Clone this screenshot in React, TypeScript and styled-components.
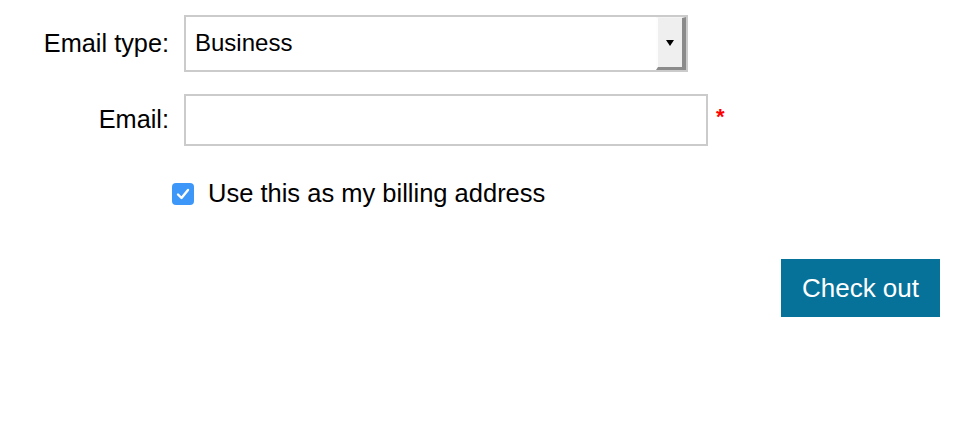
import React from "react";
import styled, { createGlobalStyle } from "styled-components";

const Global = createGlobalStyle`
  html, body { margin: 0; padding: 0; background: #fff; }
  body { font-family: "Liberation Sans", Arial, Helvetica, sans-serif; color: #000; }
`;

const Page = styled.div`
  width: 954px;
  height: 444px;
  box-sizing: border-box;
  padding: 15px 14px 0 0;
  display: flex;
  flex-direction: column;
`;

const Grid = styled.div`
  display: grid;
  grid-template-columns: 169px auto;
  column-gap: 15px;
  row-gap: 22px;
  align-items: center;
  justify-content: start;
`;

const Label = styled.label`
  text-align: right;
  font-size: 25.3px;
  line-height: 28px;
  margin-top: -2px;
`;

const FieldWrap = styled.div`
  display: flex;
  align-items: center;
  gap: 8px;
`;

const Select = styled.div`
  position: relative;
  width: 504px;
  height: 57px;
  box-sizing: border-box;
  border: 2px solid #cbcbcb;
  display: flex;
  align-items: center;
  padding-left: 9px;
  font-size: 24px;
`;

const SelectValue = styled.span`
  flex: 1;
  margin-top: -2px;
`;

const DropButton = styled.div`
  width: 30px;
  height: 100%;
  box-sizing: border-box;
  background: #efefef;
  border-top: 1px solid #f4f4f4;
  border-left: 2px solid #fdfdfd;
  border-right: 4px solid #8b8b8b;
  border-bottom: 3px solid #8b8b8b;
  display: flex;
  align-items: center;
  justify-content: center;
  padding-top: 1px;
`;

const Arrow = styled.span`
  width: 0;
  height: 0;
  border-left: 4.5px solid transparent;
  border-right: 4.5px solid transparent;
  border-top: 6px solid #000;
`;

const Input = styled.input`
  width: 524px;
  height: 52px;
  box-sizing: border-box;
  border: 2px solid #cbcbcb;
  outline: none;
  font-size: 24px;
  font-family: inherit;
  padding: 0 9px;
  margin: 0;
`;

const Required = styled.span`
  color: #ff0000;
  font-size: 22px;
  font-weight: bold;
  line-height: 1;
  margin-top: -6px;
`;

const CheckRow = styled.label`
  display: flex;
  align-items: center;
  gap: 14px;
  margin-top: 33px;
  padding-left: 172px;
  font-size: 25.5px;
  line-height: 28px;
`;

const Box = styled.span`
  width: 22px;
  height: 22px;
  border-radius: 4px;
  background: #3d97f8;
  display: flex;
  align-items: center;
  justify-content: center;
  margin-top: 2px;
`;

const Actions = styled.div`
  display: flex;
  justify-content: flex-end;
  margin-top: 52px;
`;

const Button = styled.button`
  width: 159px;
  height: 58px;
  border: none;
  background: #06729a;
  color: #fff;
  font-family: inherit;
  font-size: 26px;
  padding: 0;
  cursor: pointer;
`;

export default function App() {
  return (
    <>
      <Global />
      <Page>
        <Grid>
          <Label>Email type:</Label>
          <FieldWrap>
            <Select>
              <SelectValue>Business</SelectValue>
              <DropButton>
                <Arrow />
              </DropButton>
            </Select>
          </FieldWrap>
          <Label>Email:</Label>
          <FieldWrap>
            <Input type="email" />
            <Required>*</Required>
          </FieldWrap>
        </Grid>
        <CheckRow>
          <Box>
            <svg width="14" height="12" viewBox="0 0 14 12">
              <path d="M2 6.5 L5.5 10 L12 2" fill="none" stroke="#fff" strokeWidth="2.4" strokeLinecap="round" strokeLinejoin="round" />
            </svg>
          </Box>
          Use this as my billing address
        </CheckRow>
        <Actions>
          <Button>Check out</Button>
        </Actions>
      </Page>
    </>
  );
}
